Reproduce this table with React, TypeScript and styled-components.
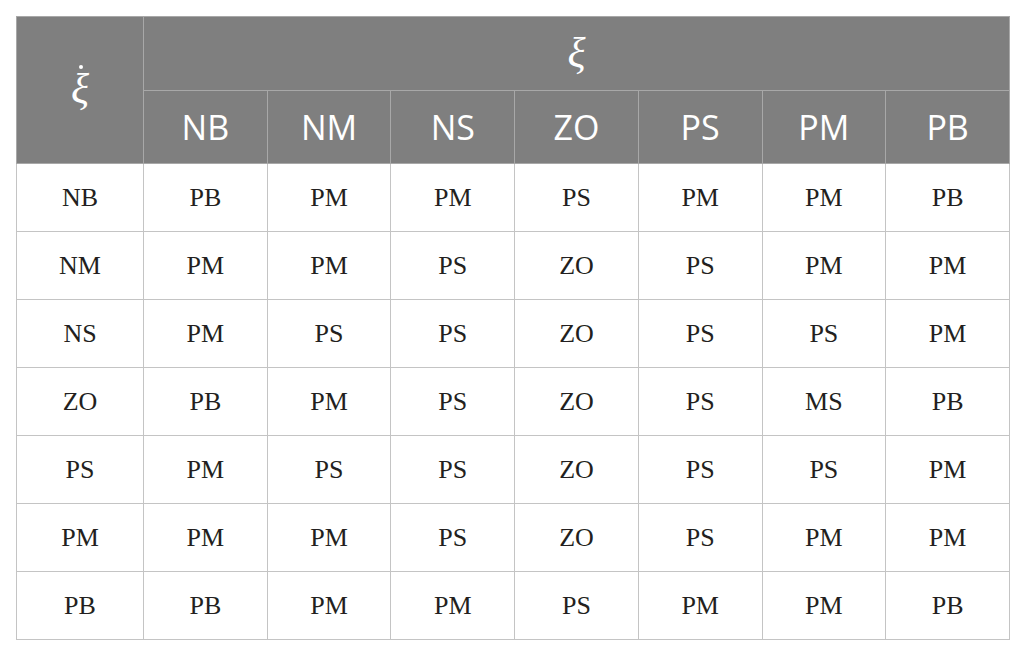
import React from "react";
import styled, { createGlobalStyle } from "styled-components";

const Global = createGlobalStyle`
  html, body { margin: 0; padding: 0; background: #ffffff; }
`;

const Page = styled.div`
  padding: 16px 0 0 16px;
`;

const Table = styled.table`
  border-collapse: collapse;
  table-layout: fixed;
  width: 994px;
  border: 1px solid #c4c4c4;
`;

const HeadCell = styled.th<{ $h?: number }>`
  background: #7f7f7f;
  color: #ffffff;
  border: 1px solid #a8a8a8;
  font-family: "Open Sans", "Liberation Sans", sans-serif;
  font-weight: 400;
  font-size: 34px;
  height: ${(p) => p.$h ?? 72}px;
  padding: 0;
  text-align: center;
  vertical-align: middle;
`;

const Greek = styled.span<{ $dot?: boolean }>`
  position: relative;
  display: inline-block;
  font-family: "Liberation Serif", "DejaVu Serif", serif;
  font-style: italic;
  font-size: 42px;
  line-height: 1;
  &::before {
    content: "";
    display: ${(p) => (p.$dot ? "block" : "none")};
    position: absolute;
    left: 50%;
    top: -3px;
    width: 4px;
    height: 4px;
    margin-left: -1px;
    border-radius: 50%;
    background: #ffffff;
  }
`;

const Cell = styled.td`
  border: 1px solid #c4c4c4;
  height: 67px;
  padding: 0;
  text-align: center;
  vertical-align: middle;
  font-family: "Liberation Serif", serif;
  font-size: 26px;
  color: #231f20;
`;

const cols = ["NB", "NM", "NS", "ZO", "PS", "PM", "PB"];
const rows: string[][] = [
  ["NB", "PB", "PM", "PM", "PS", "PM", "PM", "PB"],
  ["NM", "PM", "PM", "PS", "ZO", "PS", "PM", "PM"],
  ["NS", "PM", "PS", "PS", "ZO", "PS", "PS", "PM"],
  ["ZO", "PB", "PM", "PS", "ZO", "PS", "MS", "PB"],
  ["PS", "PM", "PS", "PS", "ZO", "PS", "PS", "PM"],
  ["PM", "PM", "PM", "PS", "ZO", "PS", "PM", "PM"],
  ["PB", "PB", "PM", "PM", "PS", "PM", "PM", "PB"],
];

export default function App() {
  return (
    <Page>
      <Global />
      <Table>
        <colgroup>
          <col style={{ width: 127 }} />
          {cols.map((c) => (
            <col key={c} />
          ))}
        </colgroup>
        <thead>
          <tr>
            <HeadCell rowSpan={2} $h={73}>
              <Greek $dot>ξ</Greek>
            </HeadCell>
            <HeadCell colSpan={7} $h={73}>
              <Greek>ξ</Greek>
            </HeadCell>
          </tr>
          <tr>
            {cols.map((c) => (
              <HeadCell key={c} $h={72}>
                {c}
              </HeadCell>
            ))}
          </tr>
        </thead>
        <tbody>
          {rows.map((r, i) => (
            <tr key={i}>
              {r.map((v, j) => (
                <Cell key={j}>{v}</Cell>
              ))}
            </tr>
          ))}
        </tbody>
      </Table>
    </Page>
  );
}
